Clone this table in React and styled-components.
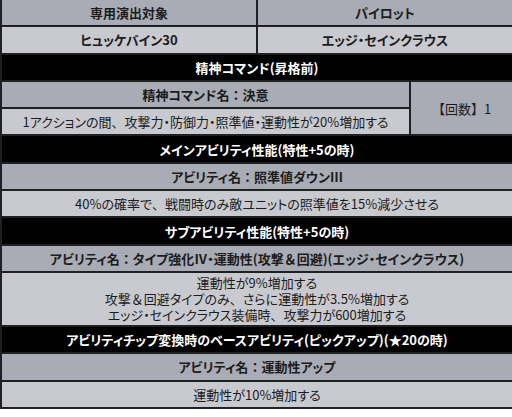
import styled, { createGlobalStyle } from "styled-components";

const Global = createGlobalStyle`
  body {
    margin: 0;
    background: #ffffff;
    font-family: "Noto Sans CJK JP", "Noto Sans", sans-serif;
  }
`;

const Table = styled.table`
  width: 512px;
  border-collapse: collapse;
  table-layout: fixed;
`;

const Cell = styled.td`
  height: 25.3px;
  padding: 0 4px;
  border: 2px solid #202022;
  border-top: ${(p) => (p.$first ? "none" : "2px solid #202022")};
  text-align: center;
  font-size: 13px;
  line-height: 17px;
  font-feature-settings: "palt";
  color: ${(p) => (p.$tone === "black" ? "#ffffff" : "#1c1c1c")};
  font-weight: ${(p) => (p.$bold ? 700 : 400)};
  background: ${(p) =>
    p.$tone === "black" ? "#000000" : p.$tone === "gray" ? "#a9acb4" : "#c9cacf"};
`;

const Full = styled.span`
  font-feature-settings: normal;
`;

const Lines = styled.div`
  padding: 2px 0;
  line-height: 16px;
`;

// keep the wide punctuation of the original at full width
const wide = /([、：【】＆])/;
const Txt = ({ children }) =>
  children.split(wide).map((part, i) =>
    wide.test(part) ? <Full key={i}>{part}</Full> : part
  );

const rows = [
  { tone: "black", text: "メインアビリティ性能(特性+5の時)" },
  { tone: "gray", text: "アビリティ名：照準値ダウンⅢ" },
  { tone: "light", text: "40%の確率で、戦闘時のみ敵ユニットの照準値を15%減少させる" },
  { tone: "black", text: "サブアビリティ性能(特性+5の時)" },
  { tone: "gray", text: "アビリティ名：タイプ強化Ⅳ・運動性(攻撃＆回避)(エッジ・セインクラウス)" },
  {
    tone: "light",
    lines: [
      "運動性が9%増加する",
      "攻撃＆回避タイプのみ、さらに運動性が3.5%増加する",
      "エッジ・セインクラウス装備時、攻撃力が600増加する",
    ],
  },
  { tone: "black", text: "アビリティチップ変換時のベースアビリティ(ピックアップ)(★20の時)" },
  { tone: "gray", text: "アビリティ名：運動性アップ" },
  { tone: "light", text: "運動性が10%増加する" },
];

const App = () => {
  return (
    <>
      <Global />
      <Table>
        <colgroup>
          <col style={{ width: "256px" }} />
          <col style={{ width: "153px" }} />
          <col style={{ width: "103px" }} />
        </colgroup>
        <tbody>
          <tr>
            <Cell $first $tone="gray" $bold>専用演出対象</Cell>
            <Cell $first $tone="gray" $bold colSpan={2}>パイロット</Cell>
          </tr>
          <tr>
            <Cell $tone="light" $bold>ヒュッケバイン30</Cell>
            <Cell $tone="light" $bold colSpan={2}>エッジ・セインクラウス</Cell>
          </tr>
          <tr>
            <Cell $tone="black" $bold colSpan={3}>精神コマンド(昇格前)</Cell>
          </tr>
          <tr>
            <Cell $tone="gray" $bold colSpan={2}>
              <Txt>精神コマンド名：決意</Txt>
            </Cell>
            <Cell $tone="gray" rowSpan={2}>
              <Txt>【回数】1</Txt>
            </Cell>
          </tr>
          <tr>
            <Cell $tone="light" colSpan={2}>
              <Txt>1アクションの間、攻撃力・防御力・照準値・運動性が20%増加する</Txt>
            </Cell>
          </tr>
          {rows.map((row, i) => (
            <tr key={i}>
              <Cell $tone={row.tone} $bold={row.tone !== "light"} colSpan={3}>
                {row.lines ? (
                  <Lines>
                    {row.lines.map((l, j) => (
                      <div key={j}>
                        <Txt>{l}</Txt>
                      </div>
                    ))}
                  </Lines>
                ) : (
                  <Txt>{row.text}</Txt>
                )}
              </Cell>
            </tr>
          ))}
        </tbody>
      </Table>
    </>
  );
};

export default App;
